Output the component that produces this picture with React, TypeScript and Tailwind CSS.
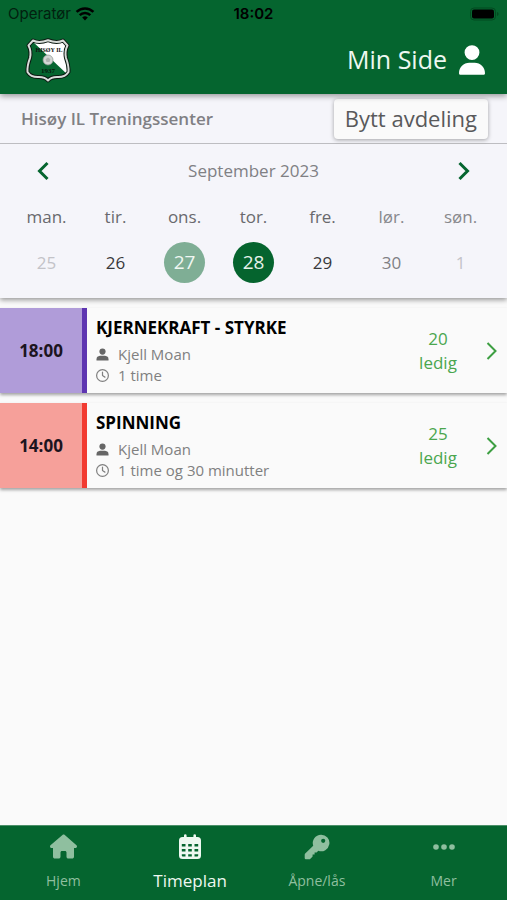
import { useState } from "react";
import { FaHouse, FaRegClock, FaUser } from "react-icons/fa6";

type Day = { weekday: string; date: number; tone: string; weekdayTone: string };

const days: Day[] = [
  { weekday: "man.", date: 25, tone: "text-[17px] text-[#c3c3c8]", weekdayTone: "text-[#69696d]" },
  { weekday: "tir.", date: 26, tone: "text-[17px] text-[#39393b]", weekdayTone: "text-[#69696d]" },
  { weekday: "ons.", date: 27, tone: "bg-[#7fae95] text-[19px] text-[#f0f7f2]", weekdayTone: "text-[#69696d]" },
  { weekday: "tor.", date: 28, tone: "bg-[#05642e] text-[19px] text-[#e6f2ea]", weekdayTone: "text-[#69696d]" },
  { weekday: "fre.", date: 29, tone: "text-[17px] text-[#39393b]", weekdayTone: "text-[#69696d]" },
  { weekday: "lør.", date: 30, tone: "text-[17px] text-[#7f7f84]", weekdayTone: "text-[#88888c]" },
  { weekday: "søn.", date: 1, tone: "text-[17px] text-[#c3c3c8]", weekdayTone: "text-[#88888c]" },
];

const sessions = [
  {
    time: "18:00",
    title: "KJERNEKRAFT - STYRKE",
    trainer: "Kjell Moan",
    duration: "1 time",
    free: 20,
    colors: "border-[#5e35b1] bg-[#b09cd9]",
  },
  {
    time: "14:00",
    title: "SPINNING",
    trainer: "Kjell Moan",
    duration: "1 time og 30 minutter",
    free: 25,
    colors: "border-[#f23a31] bg-[#f6a09a]",
  },
];

function Chevron({ direction, className }: { direction: "left" | "right"; className: string }) {
  return (
    <svg viewBox="0 0 12 20" fill="none" stroke="currentColor" className={className} aria-hidden="true">
      <path d={direction === "left" ? "M10.5 2 2.5 10l8 8" : "M1.5 2l8 8-8 8"} />
    </svg>
  );
}

function WifiIcon() {
  return (
    <svg viewBox="0 0 20 14" className="h-[14px] w-5" fill="none" stroke="currentColor" aria-hidden="true">
      <path d="M1.6 4.9a12 12 0 0 1 16.8 0" strokeWidth="2.6" />
      <path d="M4.7 8.1a7.6 7.6 0 0 1 10.6 0" strokeWidth="2.5" />
      <path d="M10 13.4 7.2 10.5a4 4 0 0 1 5.6 0Z" fill="currentColor" stroke="none" />
    </svg>
  );
}

function BatteryIcon() {
  return (
    <svg viewBox="0 0 30 14" className="h-[14px] w-[30px]" aria-hidden="true">
      <rect x="1.5" y="1" width="25" height="12" rx="3.5" fill="none" stroke="#034a20" />
      <rect x="3" y="2.5" width="22" height="9" rx="2" fill="#000" />
      <path d="M28 5v4q1.6-.6 1.6-2t-1.6-2Z" fill="#034a20" />
    </svg>
  );
}

function PersonIcon() {
  return (
    <svg viewBox="0 0 13 13" className="size-[13px] text-[#666]" fill="currentColor" aria-hidden="true">
      <circle cx="6.5" cy="3.6" r="3.1" />
      <path d="M.5 12.500v-1.300Q.5 8.300 4 7.800h5q3.500.5 3.500 3.400v1.300Z" />
    </svg>
  );
}

function ClubLogo() {
  const shield =
    "M8 2.5Q14 5.5 23 2.2 32 5.5 38 2.5L42.5 7.5Q39.5 13 41 20 44 28 43.5 34 40 39.5 32 39 26 39 23 42.5 20 39 14 39 6 39.5 2.5 34 2 28 5 20 6.5 13 3.5 7.5Z";
  return (
    <svg viewBox="0 0 46 45" className="h-[45px] w-[46px]" role="img" aria-label="Hisøy IL">
      <defs>
        <clipPath id="club-shield">
          <path d={shield} />
        </clipPath>
      </defs>
      <path d={shield} fill="#05652f" />
      <path d="M5 1H46V40Z" fill="#fff" clipPath="url(#club-shield)" />
      <path d={shield} fill="none" stroke="#0c1a12" strokeWidth="4" strokeLinejoin="round" />
      <path d={shield} fill="none" stroke="#d8dcd9" strokeWidth="2" strokeLinejoin="round" />
      <circle cx="23" cy="22" r="5" fill="#d3d6d4" stroke="#8d9690" strokeWidth="0.7" />
      <path d="m23 19.5 2.4 1.8-.9 2.7h-3l-.9-2.7Z" fill="#aeb4b0" />
      <text x="24" y="14" textAnchor="middle" fontSize="6" fontWeight="700" fontFamily="'Liberation Serif', serif" fill="#111">
        HISØY IL
      </text>
      <text x="23" y="35" textAnchor="middle" fontSize="7" fontWeight="700" fontFamily="'Liberation Serif', serif" fill="#08150d">
        1937
      </text>
    </svg>
  );
}

function CalendarIcon() {
  return (
    <svg viewBox="0 0 24 26" className="h-[26px] w-6" aria-hidden="true">
      <path
        fill="currentColor"
        fillRule="evenodd"
        d="M6 1.5a1.3 1.3 0 0 1 2.6 0V3h6.8V1.5a1.3 1.3 0 0 1 2.6 0V3h1.5A3.5 3.5 0 0 1 23 6.5v15a3.5 3.5 0 0 1-3.5 3.500h-15A3.500 3.500 0 0 1 1 21.500v-15A3.500 3.500 0 0 1 4.500 3H6ZM3.800 10v2.500h3.700V10Zm6.400 0v2.500h3.600V10Zm6.300 0v2.500H20.200V10ZM3.800 15v2.500h3.700V15Zm6.400 0v2.500h3.600V15Zm6.300 0v2.500H20.200V15ZM3.800 20.300v1.200q0 1 1 1h2.700v-2.200Zm6.400 0v2.200h3.600v-2.200Zm6.300 0v2.200h2.700q1 0 1-1v-1.200Z"
      />
    </svg>
  );
}

function KeyIcon() {
  return (
    <svg viewBox="0 0 26 26" className="size-[26px]" aria-hidden="true">
      <path
        fill="currentColor"
        fillRule="evenodd"
        d="M17 .7a8.300 8.300 0 1 1-2.700 16.100L12.600 18.500H10.600V20.500H8.600V22.600L6.400 24.700Q6 25.200 5.300 25.200H1.900Q.7 25.200.7 24V20.700Q.7 20.100 1.200 19.600L9.200 11.700A8.300 8.300 0 0 1 17 .7ZM19.200 4.700a2.100 2.100 0 1 0 0 4.200 2.100 2.100 0 0 0 0-4.200Z"
      />
    </svg>
  );
}

function DotsIcon() {
  return (
    <svg viewBox="0 0 22 6" className="h-[6px] w-[22px]" fill="currentColor" aria-hidden="true">
      <circle cx="3" cy="3" r="2.8" />
      <circle cx="11" cy="3" r="2.8" />
      <circle cx="19" cy="3" r="2.8" />
    </svg>
  );
}

const tabs = [
  { label: "Hjem", icon: <FaHouse className="size-[27px]" /> },
  { label: "Timeplan", icon: <CalendarIcon /> },
  { label: "Åpne/lås", icon: <KeyIcon /> },
  { label: "Mer", icon: <DotsIcon /> },
];

export default function App() {
  const [activeTab, setActiveTab] = useState("Timeplan");

  return (
    <div className="flex min-h-screen flex-col bg-[#fafafa] font-['Open_Sans',sans-serif]">
      <header className="relative z-10 bg-[#05652f] shadow-[0_2px_6px_rgba(0,0,0,0.4)]">
        <div className="grid h-7 grid-cols-3 items-center px-2 font-[Inter,sans-serif] text-[15px] text-black">
          <div className="flex items-center gap-1">
            <span className="text-[#02210f]">Operatør</span>
            <WifiIcon />
          </div>
          <span className="text-center font-semibold">18:02</span>
          <div className="flex justify-end">
            <BatteryIcon />
          </div>
        </div>
        <div className="flex h-[66px] items-center justify-between pr-[22px] pb-[2px] pl-[25px]">
          <ClubLogo />
          <button type="button" className="flex items-center gap-3 text-[25px] text-[#eef8f1]">
            Min Side
            <FaUser className="h-[30px] w-[26px] text-white" />
          </button>
        </div>
      </header>

      <section className="bg-[#f5f5fa] shadow-[0_2px_5px_rgba(0,0,0,0.4)]">
        <div className="flex h-[50px] items-center justify-between border-b border-[#bdbdc1] pr-[19px] pl-[21px]">
          <h1 className="text-[17px] font-semibold text-[#808084]">Hisøy IL Treningssenter</h1>
          <button
            type="button"
            className="h-10 rounded bg-[#fafafa] px-[11px] text-[22px] text-[#59595b] shadow-[0_1px_4px_rgba(0,0,0,0.35)]"
          >
            Bytt avdeling
          </button>
        </div>

        <div className="flex h-[54px] items-center justify-between px-[37px]">
          <button type="button" aria-label="Forrige uke" className="text-[#05652f]">
            <Chevron direction="left" className="h-5 w-3 stroke-3" />
          </button>
          <h2 className="text-[17px] text-[#808084]">September 2023</h2>
          <button type="button" aria-label="Neste uke" className="text-[#05652f]">
            <Chevron direction="right" className="h-5 w-3 stroke-3" />
          </button>
        </div>

        <div className="grid grid-cols-7 px-3 pt-[3px] pb-[15px]">
          {days.map((day) => (
            <div key={day.weekday} className="flex flex-col items-center gap-[9px]">
              <span className={`text-[17px] leading-8 ${day.weekdayTone}`}>{day.weekday}</span>
              <button
                type="button"
                className={`flex size-[41px] items-center justify-center rounded-full ${day.tone}`}
              >
                {day.date}
              </button>
            </div>
          ))}
        </div>
      </section>

      <main className="flex flex-col gap-[10px] py-[10px]">
        {sessions.map((session) => (
          <button
            key={session.title}
            type="button"
            className="flex h-[85px] w-full items-stretch bg-[#fafafa] pr-[9px] text-left shadow-[0_2px_3px_rgba(0,0,0,0.35)]"
          >
            <span
              className={`flex w-[87px] items-center justify-center border-r-5 text-[17px] font-bold text-[#1c1420] ${session.colors}`}
            >
              {session.time}
            </span>
            <span className="flex flex-1 flex-col pt-2 pl-[9px]">
              <span className="mb-1 text-[17px] leading-6 font-bold text-black">{session.title}</span>
              <span className="flex items-center gap-[9px] text-[15px] leading-[21px] text-[#808080]">
                <PersonIcon />
                {session.trainer}
              </span>
              <span className="flex items-center gap-[9px] text-[15px] leading-[21px] text-[#808080]">
                <FaRegClock className="size-[13px]" />
                {session.duration}
              </span>
            </span>
            <span className="flex w-[60px] flex-col justify-center text-center text-[17px] leading-6 text-[#4aa64e]">
              <span>{session.free}</span>
              <span>ledig</span>
            </span>
            <span className="flex w-[30px] items-center justify-end text-[#3d9f42]">
              <Chevron direction="right" className="h-5 w-3 stroke-2" />
            </span>
          </button>
        ))}
      </main>

      <nav className="sticky bottom-0 mt-auto grid h-[75px] grid-cols-4 border-t border-[#4c8f69] bg-[#05652f]">
        {tabs.map((tab) => (
          <button
            key={tab.label}
            type="button"
            onClick={() => setActiveTab(tab.label)}
            className={`flex flex-col items-center pt-[7px] ${
              tab.label === activeTab ? "text-[17px] text-[#eef8f1]" : "text-sm text-[#8fbf9f]"
            }`}
          >
            <span className="flex h-[27px] items-center">{tab.icon}</span>
            <span className="mt-[9px] leading-6">{tab.label}</span>
          </button>
        ))}
      </nav>
    </div>
  );
}
